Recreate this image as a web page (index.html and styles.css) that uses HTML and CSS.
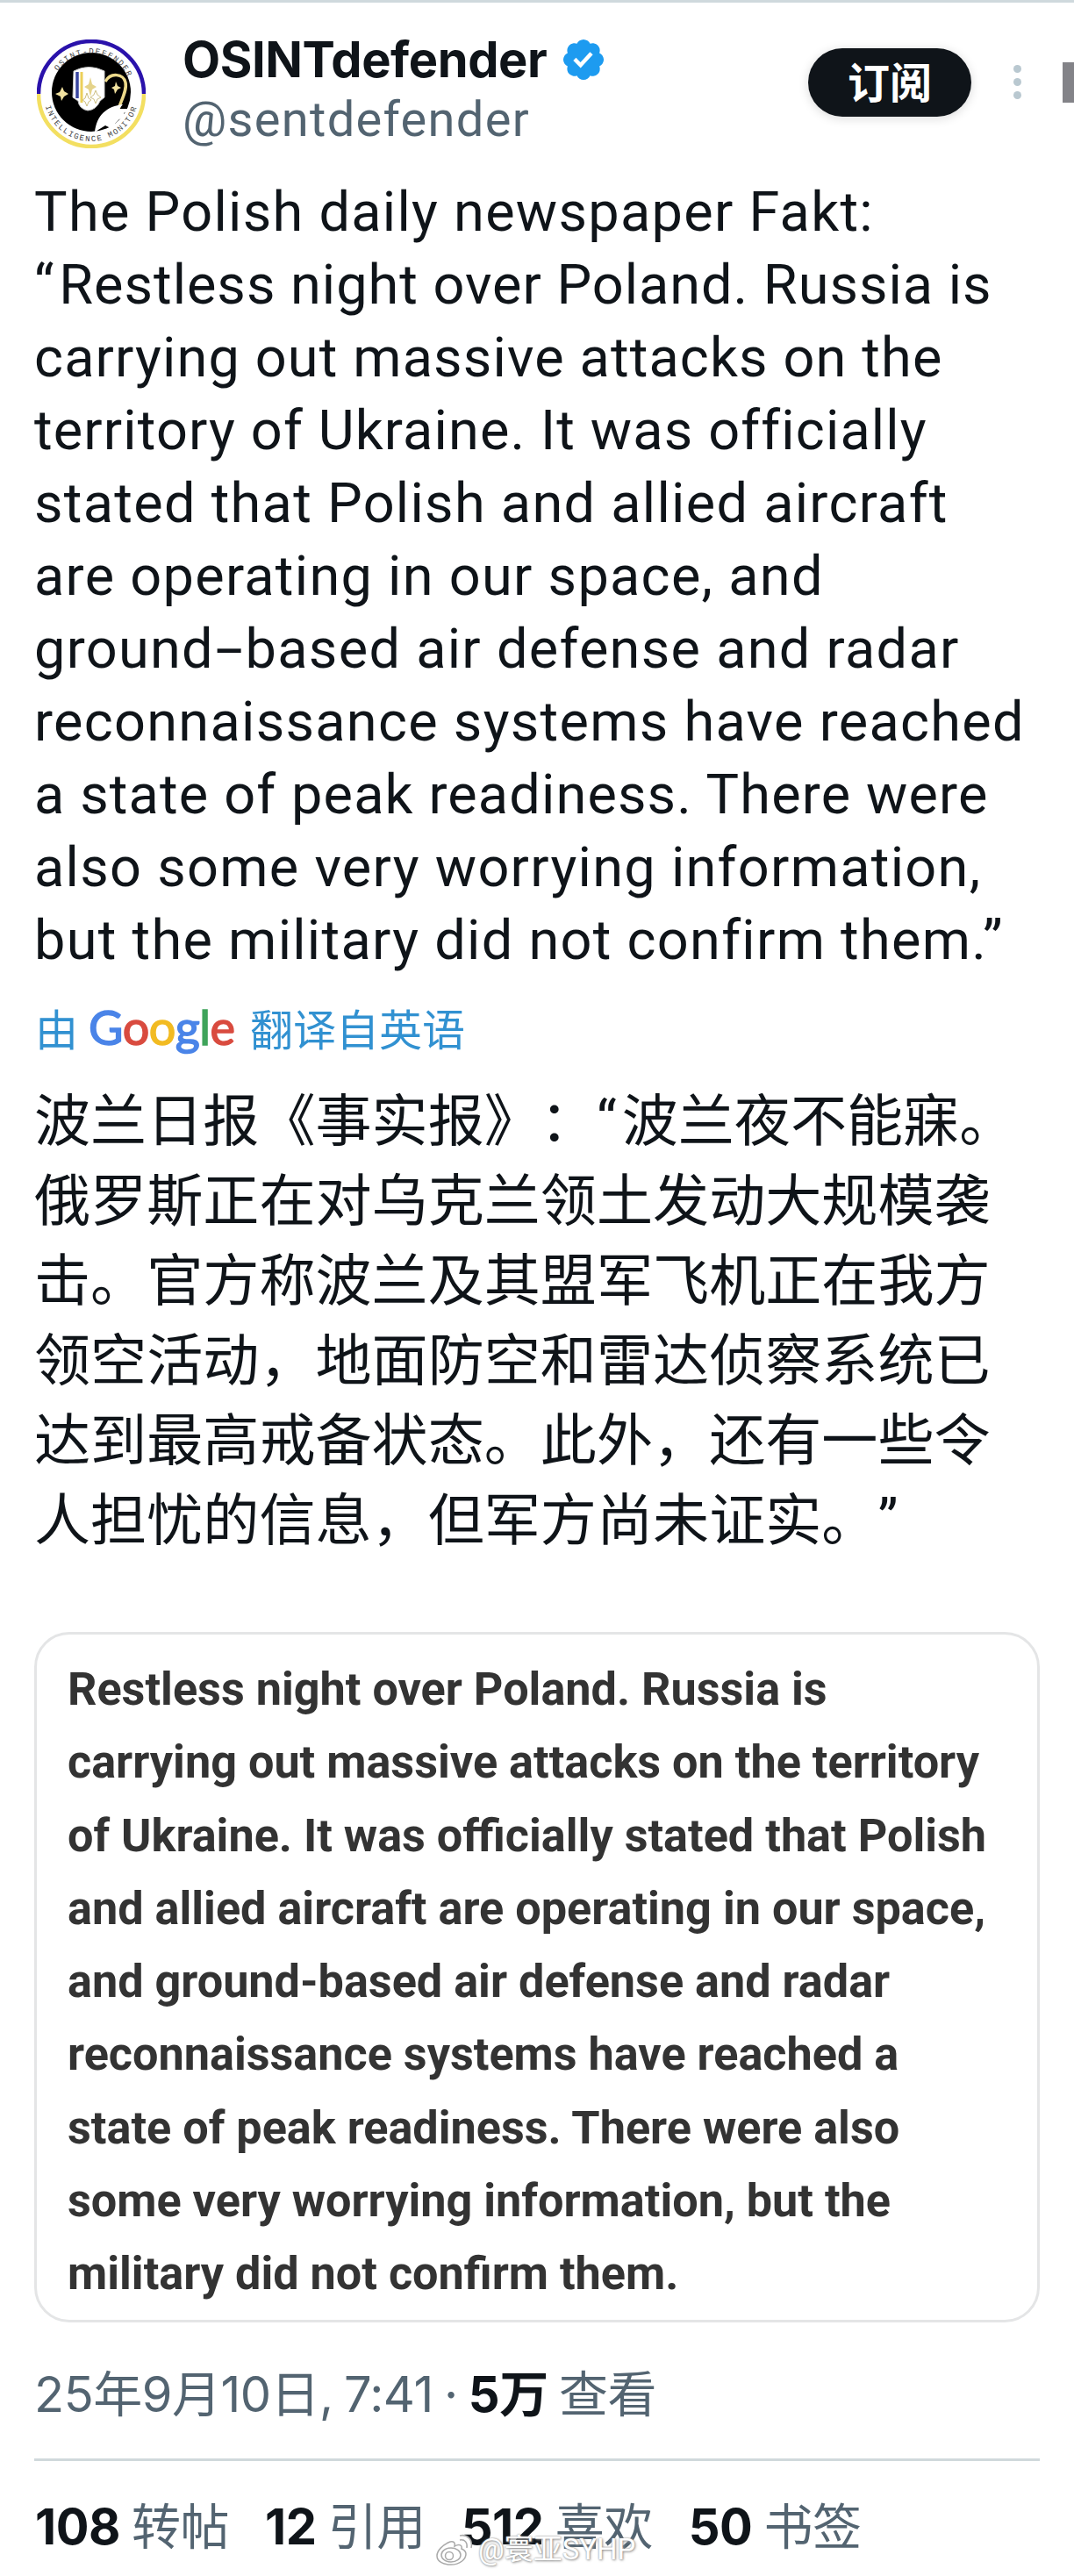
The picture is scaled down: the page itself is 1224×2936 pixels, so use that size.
FILE: index.html
```html
<!DOCTYPE html>
<html lang="zh-CN">
<head>
  <meta charset="UTF-8">
  <meta name="viewport" content="width=device-width, initial-scale=1.0">
  <title>OSINTdefender</title>
  <link rel="stylesheet" href="styles.css">
</head>
<body>
  <article class="post">
    <header class="post-header">
      <svg class="avatar" viewBox="0 0 124 124">
        <defs>
          <path id="arc-top" d="M16 62 A46 46 0 0 1 108 62"/>
          <path id="arc-bottom" d="M8 62 A54 54 0 0 0 116 62"/>
        </defs>
        <circle cx="62" cy="62" r="61" fill="#fff"/>
        <path d="M2 62 A60 60 0 0 1 122 62" fill="none" stroke="#2a12ab" stroke-width="4.5"/>
        <path d="M2 62 A60 60 0 0 0 122 62" fill="none" stroke="#f3df61" stroke-width="4.5"/>
        <circle cx="62" cy="60" r="45" fill="#000"/>
        <text class="seal"><textPath href="#arc-top" startOffset="53%" text-anchor="middle">OSINT-DEFENDER</textPath></text>
        <path d="M78 48 C84 37 99 39 101 49 C103 58 96 70 93 79" fill="none" stroke="#ecd98a" stroke-width="3.500"/>
        <path d="M66 106 C68 86 80 76 98 74 L94 79 H107 L99 84 L103 89 L94 91 L89 96 L93 98 L84 101 L78 98 L70 103 Z" fill="#fff"/>
        <text class="seal"><textPath href="#arc-bottom" startOffset="50%" text-anchor="middle">INTELLIGENCE MONITOR</textPath></text>
        <path d="M42 36 Q59 27 77 36 V66 L72 70 Q68 80 58 81 Q48 79 47 70 L41 66 Z" fill="#fff" stroke="#c9c9c9" stroke-width="1"/>
        <path d="M46 37 V67" stroke="#3a46a0" stroke-width="3.500"/>
        <path d="M51 37 V72" stroke="#ecd05a" stroke-width="3"/>
        <path d="M61 43 L63 51 L68 54 L63 57 L61 65 L59 57 L54 54 L59 51 Z" fill="#e5d38a"/>
        <path d="M67 58 L69 63 L73 66 L69 68 L67 73 L65 68 L61 66 L65 63 Z M57 61 L59 67 L62 69 L59 71 L57 76 L55 71 L52 69 L55 67 Z" fill="none" stroke="#cdbf85" stroke-width="1"/>
        <path d="M29 54 L31 59 L36 62 L31 65 L28 70 L27 65 L21 62 L26 60 Z M90 48 L92 53 L96 55 L92 57 L89 62 L88 57 L85 55 L89 53 Z" fill="#f2e2a0"/>
      </svg>
      <div class="author">
        <div class="name-row">
          <span class="name">OSINTdefender</span>
          <svg class="badge" viewBox="0 0 22 22">
            <path fill="#1d9bf0" d="M20.396 11c-.018-.646-.215-1.275-.57-1.816-.354-.54-.852-.972-1.438-1.246.223-.607.27-1.264.14-1.897-.131-.634-.437-1.218-.882-1.687-.47-.445-1.053-.75-1.687-.882-.633-.13-1.29-.083-1.897.14-.273-.587-.704-1.086-1.245-1.44S11.647 1.620 11 1.604c-.646.017-1.273.213-1.813.568s-.969.854-1.240 1.440c-.608-.223-1.267-.272-1.902-.14-.635.130-1.220.436-1.690.882-.445.470-.749 1.055-.878 1.688-.130.633-.080 1.290.144 1.896-.587.274-1.087.705-1.443 1.245-.356.540-.555 1.170-.574 1.817.020.647.218 1.276.574 1.817.356.540.856.972 1.443 1.245-.224.606-.274 1.263-.144 1.896.130.634.433 1.218.877 1.688.470.443 1.054.747 1.687.878.633.132 1.290.084 1.897-.136.274.586.705 1.084 1.246 1.439.540.354 1.170.551 1.816.569.647-.016 1.276-.213 1.817-.567s.972-.854 1.245-1.440c.604.239 1.266.296 1.903.164.636-.132 1.220-.447 1.680-.907.460-.460.776-1.044.908-1.681s.075-1.299-.165-1.903c.586-.274 1.084-.705 1.439-1.246.354-.540.551-1.170.569-1.816z"/>
            <path fill="#fff" d="M9.662 14.850l-3.429-3.428 1.293-1.302 2.072 2.072 4.400-4.794 1.347 1.246z"/>
          </svg>
        </div>
        <div class="handle">@sentdefender</div>
      </div>
      <button class="subscribe">订阅</button>
      <div class="more"><i></i><i></i><i></i></div>
      <div class="scroll-mark"></div>
    </header>

    <p class="text-en">
      The Polish daily newspaper Fakt:<br>
      <span class="tighter"><q>“</q>Restless night over Poland. Russia is</span><br>
      <span class="tight">carrying out massive attacks on the</span><br>
      <span class="tight">territory of Ukraine. It was officially</span><br>
      stated that Polish and allied aircraft<br>
      are operating in our space, and<br>
      ground<span class="hyphen">-</span>based air defense and radar<br>
      reconnaissance systems have reached<br>
      <span class="tight">a state of peak readiness. There were</span><br>
      also some very worrying information,<br>
      but the military did not confirm them.”
    </p>

    <div class="translated">
      <span>由</span>
      <span class="google"><b class="blue">G</b><b class="red">o</b><b class="yellow">o</b><b class="blue">g</b><b class="green">l</b><b class="red">e</b></span>
      <span>翻译自英语</span>
    </div>

    <p class="text-zh">
      波兰日报《事实报》：<q>“</q>波兰夜不能寐。<br>
      俄罗斯正在对乌克兰领土发动大规模袭<br>
      击。官方称波兰及其盟军飞机正在我方<br>
      领空活动，地面防空和雷达侦察系统已<br>
      达到最高戒备状态。此外，还有一些令<br>
      人担忧的信息，但军方尚未证实。<q>”</q>
    </p>

    <div class="card">
      Restless night over Poland. Russia is<br>
      carrying out massive attacks on the territory<br>
      of Ukraine. It was officially stated that Polish<br>
      and allied aircraft are operating in our space,<br>
      and ground-based air defense and radar<br>
      reconnaissance systems have reached a<br>
      state of peak readiness. There were also<br>
      some very worrying information, but the<br>
      military did not confirm them.
    </div>

    <div class="meta">25年9月10日, 7:41 · <strong>5万</strong> 查看</div>

    <footer class="stats">
      <span><strong>108</strong> 转帖</span>
      <span><strong>12</strong> 引用</span>
      <span><strong>512</strong> 喜欢</span>
      <span><strong>50</strong> 书签</span>
    </footer>
  </article>

  <div class="watermark">
    <svg viewBox="0 0 44 38">
      <path d="M17 10 C9 13 2 20 2 26 C2 33 10 36 18 36 C28 36 35 30 35 24 C35 20 32 19 30 18 C31 14 28 12 22 15 C23 11 21 9 17 10 Z"/>
      <ellipse cx="18" cy="25" rx="11" ry="8"/>
      <circle cx="16" cy="26" r="4.500"/>
      <path d="M28 8 C34 7 37 11 36 17 M28 3 C37 1 43 8 41 17"/>
    </svg>
    <span>@寰亚SYHP</span>
  </div>
</body>
</html>
```
FILE: styles.css
```css
body {
  margin: 0;
  background: #fff;
  color: #0f1419;
  overflow: hidden;
  position: relative;
  height: 2936px;
}

q {
  quotes: none;
  line-height: 0;
}

.post {
  border-top: 3px solid #cfd9dd;
  padding: 0 39px 0 40px;
  white-space: nowrap;
}

.post-header {
  display: flex;
  height: 197px;
  margin-right: -39px;
}

.avatar {
  width: 124px;
  height: 124px;
  margin: 42px 42px 0 2px;
  flex: none;
}

.seal {
  font: 9px "Liberation Mono", monospace;
  letter-spacing: 1.6px;
  fill: #444;
}

.author {
  width: 713px;
  padding-top: 31px;
}

.name-row {
  display: flex;
  align-items: center;
  gap: 15px;
  height: 69px;
}

.name {
  font: 700 56px/69px Inter, sans-serif;
  letter-spacing: -0.4px;
}

.badge {
  width: 54px;
  height: 54px;
  margin-top: -2px;
}

.handle {
  font: 400 56px/66px Roboto, sans-serif;
  letter-spacing: 1.3px;
  color: #536471;
}

.subscribe {
  width: 186px;
  height: 78px;
  margin-top: 52px;
  padding: 0 0 6px;
  border: none;
  border-radius: 39px;
  background: #0f1419;
  color: #fff;
  font: 700 48px/72px "Noto Sans CJK SC", sans-serif;
  box-shadow: 0 2px 12px rgba(0, 0, 0, 0.15);
}

.more {
  display: flex;
  flex-direction: column;
  gap: 6px;
  margin: 71px 0 0 48px;
}

.more i {
  width: 9px;
  height: 9px;
  border-radius: 50%;
  background: #b9c8d0;
}

.scroll-mark {
  width: 13px;
  height: 46px;
  margin: 68px 0 0 auto;
  background: #838388;
}

.text-en {
  margin: 0 0 0 -1px;
  font: 400 63px/83px Roboto, sans-serif;
  letter-spacing: 1.3px;
}

.text-en q {
  margin-right: 5px;
}

.tight { letter-spacing: 1.15px; }
.tighter { letter-spacing: 1px; }

.hyphen {
  display: inline-block;
  margin: 0 8px 0 9px;
  transform: scaleX(1.8);
}

.translated {
  display: flex;
  align-items: center;
  height: 60px;
  margin-top: 28px;
  color: #3191d1;
  font: 400 49px/60px "Noto Sans CJK SC", sans-serif;
}

.google {
  width: 166px;
  margin: 0 18px 0 12px;
  font: 400 54px/60px Lato, sans-serif;
  letter-spacing: -0.5px;
}

.google b {
  font-weight: inherit;
  -webkit-text-stroke: 1.5px currentColor;
}

.blue { color: #4a84e8; }
.red { color: #d94b3f; }
.yellow { color: #f2bb22; }
.green { color: #3fa45b; }

.text-zh {
  margin: 26px 0 0 -1px;
  font: 400 64.1px/91px "Noto Sans CJK SC", sans-serif;
  text-spacing-trim: space-all;
}

.text-zh q {
  font-family: Roboto, sans-serif;
  letter-spacing: 6px;
}

.card {
  box-sizing: border-box;
  height: 787px;
  margin: 87px 0 0 -1px;
  padding: 21px 35px 0;
  border: 3px solid #e4e5e6;
  border-radius: 40px;
  color: #333;
  font: 700 52.2px/83.3px Roboto, sans-serif;
}

.meta {
  height: 155px;
  margin-left: -1px;
  border-bottom: 3px solid #d0d9dc;
  font: 400 56px/164px Inter, "Noto Sans CJK SC", sans-serif;
  letter-spacing: -0.5px;
  word-spacing: -3px;
  color: #536471;
}

.meta strong,
.stats strong {
  color: #0f1419;
  font-weight: 700;
}

.stats {
  display: flex;
  gap: 41px;
  font: 400 56px/150px Inter, "Noto Sans CJK SC", sans-serif;
  letter-spacing: -0.5px;
  word-spacing: -2px;
  color: #536471;
}

/* overlaid on the stats row */
.watermark {
  position: absolute;
  left: 496px;
  top: 2886px;
  display: flex;
  align-items: center;
  gap: 5px;
  color: #fff;
  font: 400 33px/40px Roboto, "Noto Sans CJK SC", sans-serif;
  text-shadow: 0 0 2px #888, 1px 1px 3px #999;
}

.watermark svg {
  width: 44px;
  height: 38px;
  fill: #fff;
  stroke: #aaa;
  stroke-width: 1.5;
}
```
